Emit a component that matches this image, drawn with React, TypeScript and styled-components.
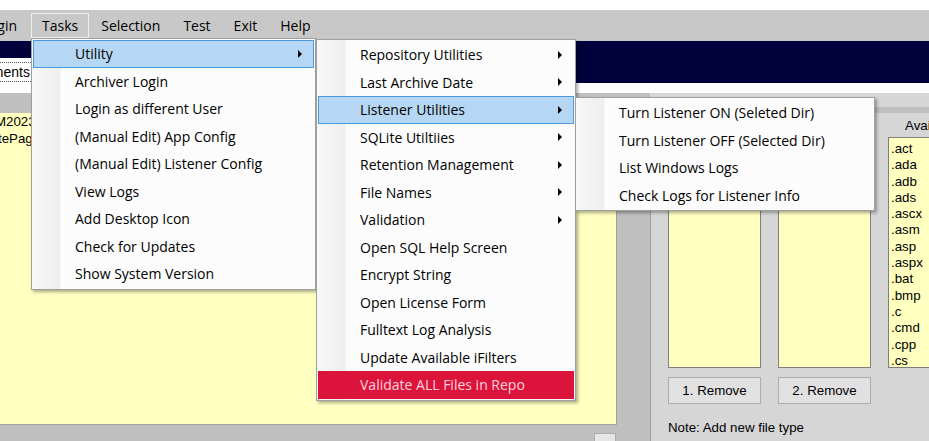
import React from 'react';
import styled, { createGlobalStyle, css } from 'styled-components';

const UI_FONT = `"Open Sans", "Noto Sans", sans-serif`;
const LIST_FONT = `"Liberation Sans", Arial, sans-serif`;

const GlobalStyle = createGlobalStyle`
  html, body { margin: 0; padding: 0; background: #ffffff; overflow: hidden; }
  #root { width: 929px; height: 441px; }
`;

const Window = styled.div`
  position: relative;
  width: 929px;
  height: 441px;
  overflow: hidden;
  display: flex;
  flex-direction: column;
  background: #bfbfbf;
`;

const TopStrip = styled.div`
  flex: none;
  height: 10px;
  background: #ffffff;
`;

const MenuBar = styled.div`
  flex: none;
  height: 31px;
  background: #c8c8c8;
  display: flex;
  align-items: center;
  gap: 1px;
  font-family: ${UI_FONT};
  font-size: 14px;
  color: #000;
`;

const MenuBarItem = styled.div<{ $open?: boolean; $lead?: boolean }>`
  box-sizing: border-box;
  height: 25px;
  display: flex;
  align-items: center;
  justify-content: flex-end;
  padding: 0 10px;
  border: 1px solid ${(p) => (p.$open ? '#efefef' : 'transparent')};
  white-space: nowrap;
  ${(p) =>
    p.$lead &&
    css`
      width: 58px;
      margin-left: -28px;
      flex: none;
      padding-right: 12px;
    `}
`;

const Header = styled.div`
  flex: none;
  height: 52px;
  background: #ffffff;
  display: flex;
  flex-direction: column;
`;

const NavyBand = styled.div`
  height: 42px;
  background: #00003a;
  display: flex;
  align-items: flex-end;
`;

const DocTab = styled.div`
  width: 80px;
  height: 34px;
  margin-left: -49px;
  margin-bottom: -9px;
  background: #ffffff;
  box-sizing: border-box;
  padding-top: 4px;
`;

const FocusRect = styled.div`
  height: 20px;
  box-sizing: border-box;
  border-top: 1px dotted #555;
  border-bottom: 1px dotted #555;
  display: flex;
  align-items: center;
  justify-content: flex-end;
  padding-right: 1px;
  font-family: ${LIST_FONT};
  font-size: 14px;
  color: #000;
`;

const Content = styled.div`
  flex: 1;
  display: grid;
  grid-template-columns: 617px 33px 1fr;
  min-height: 0;
`;

const LeftColumn = styled.div`
  display: flex;
  flex-direction: column;
  padding-top: 20px;
`;

const YellowPanel = styled.div`
  height: 312px;
  box-sizing: border-box;
  background: #ffffc0;
  border-right: 1px solid #a0a0a0;
  border-bottom: 1px solid #a0a0a0;
  padding: 1px 0 0 0;
  font-family: ${LIST_FONT};
  font-size: 13.3px;
  line-height: 16.5px;
  color: #000;
  overflow: hidden;
`;

const PanelLine = styled.div`
  margin-left: -5px;
  white-space: nowrap;
`;

const BottomStrip = styled.div`
  flex: 1;
  display: flex;
  justify-content: flex-end;
  align-items: flex-start;
  padding: 8px 1px 0 0;
`;

const MiniButton = styled.div`
  width: 22px;
  height: 14px;
  box-sizing: border-box;
  background: #e6e6e6;
  border: 1px solid #adadad;
`;

const RightColumn = styled.div`
  grid-column: 3;
  display: flex;
  flex-direction: column;
  min-height: 0;
`;

const RightCap = styled.div`
  flex: none;
  height: 14px;
  background: #d6d6d6;
  margin-bottom: 6px;
`;

const RightPanel = styled.div`
  flex: 1;
  background: #d6d6d6;
  border-left: 1px solid #9c9c9c;
  padding-left: 17px;
  font-family: ${LIST_FONT};
  font-size: 13.3px;
  color: #000;
  overflow: hidden;
`;

const ListGrid = styled.div`
  display: grid;
  grid-template-columns: 93px 93px 93px;
  grid-template-rows: 24px 231px 27px;
  column-gap: 17px;
`;

const ListLabel = styled.div`
  display: flex;
  align-items: center;
  padding-left: 17px;
  white-space: nowrap;
`;

const ListBox = styled.div`
  box-sizing: border-box;
  background: #ffffc0;
  border: 1px solid #7f7f7f;
  padding: 3px 0 0 2px;
  line-height: 16.3px;
  overflow: hidden;
`;

const ListItem = styled.div`
  white-space: nowrap;
`;

const PushButton = styled.div`
  box-sizing: border-box;
  margin-top: 9px;
  height: 27px;
  background: #e1e1e1;
  border: 1px solid #adadad;
  display: flex;
  align-items: center;
  justify-content: center;
`;

const ButtonRow = styled.div`
  display: contents;
`;

const Note = styled.div`
  margin-top: 25px;
  line-height: 15px;
  white-space: nowrap;
`;

const NoteIndent = styled.div`
  margin-top: 5px;
  padding-left: 80px;
  line-height: 15px;
  white-space: nowrap;
`;

/* ----- drop-down menus (overlays) ----- */

const DropMenu = styled.div<{ $left: number; $top: number; $width: number }>`
  position: absolute;
  left: ${(p) => p.$left}px;
  top: ${(p) => p.$top}px;
  width: ${(p) => p.$width}px;
  box-sizing: border-box;
  padding: 1px;
  border: 1px solid #a0a0a0;
  background: linear-gradient(to right, #f8f8f8 0px, #eeeeee 28px, #fcfcfc 29px);
  box-shadow: 2px 2px 3px rgba(0, 0, 0, 0.32);
  font-family: ${UI_FONT};
  font-size: 14px;
  color: #000;
  z-index: 5;
`;

type ItemState = 'normal' | 'hover' | 'danger';

const MenuItem = styled.div<{ $state?: ItemState }>`
  height: 27.5px;
  box-sizing: border-box;
  display: flex;
  align-items: center;
  padding: 0 11px 0 41px;
  border: 1px solid transparent;
  white-space: nowrap;
  ${(p) =>
    p.$state === 'hover' &&
    css`
      background: #b5d7f3;
      border-color: #4c9ae0;
    `}
  ${(p) =>
    p.$state === 'danger' &&
    css`
      background: #dc143c;
      border-color: #dc143c;
      color: #ffd2dc;
    `}
`;

const SubArrow = styled.span`
  margin-left: auto;
  width: 0;
  height: 0;
  border-left: 4px solid #000;
  border-top: 4px solid transparent;
  border-bottom: 4px solid transparent;
`;

type Entry = { label: string; sub?: boolean; state?: ItemState };

const tasks: Entry[] = [
  { label: 'Utility', sub: true, state: 'hover' },
  { label: 'Archiver Login' },
  { label: 'Login as different User' },
  { label: '(Manual Edit) App Config' },
  { label: '(Manual Edit) Listener Config' },
  { label: 'View Logs' },
  { label: 'Add Desktop Icon' },
  { label: 'Check for Updates' },
  { label: 'Show System Version' },
];

const utility: Entry[] = [
  { label: 'Repository Utilities', sub: true },
  { label: 'Last Archive Date', sub: true },
  { label: 'Listener Utilities', sub: true, state: 'hover' },
  { label: 'SQLite Utiltiies', sub: true },
  { label: 'Retention Management', sub: true },
  { label: 'File Names', sub: true },
  { label: 'Validation', sub: true },
  { label: 'Open SQL Help Screen' },
  { label: 'Encrypt String' },
  { label: 'Open License Form' },
  { label: 'Fulltext Log Analysis' },
  { label: 'Update Available iFilters' },
  { label: 'Validate ALL Files in Repo', state: 'danger' },
];

const listener: Entry[] = [
  { label: 'Turn Listener ON (Seleted Dir)' },
  { label: 'Turn Listener OFF (Selected Dir)' },
  { label: 'List Windows Logs' },
  { label: 'Check Logs for Listener Info' },
];

const fileTypes = ['.act', '.ada', '.adb', '.ads', '.ascx', '.asm', '.asp', '.aspx', '.bat', '.bmp', '.c', '.cmd', '.cpp', '.cs'];

const Menu: React.FC<{ left: number; top: number; width: number; items: Entry[] }> = ({ left, top, width, items }) => (
  <DropMenu $left={left} $top={top} $width={width}>
    {items.map((it) => (
      <MenuItem key={it.label} $state={it.state}>
        <span>{it.label}</span>
        {it.sub && <SubArrow />}
      </MenuItem>
    ))}
  </DropMenu>
);

export default function App() {
  return (
    <>
      <GlobalStyle />
      <Window>
        <TopStrip />
        <MenuBar>
          <MenuBarItem $lead>Login</MenuBarItem>
          <MenuBarItem $open>Tasks</MenuBarItem>
          <MenuBarItem>Selection</MenuBarItem>
          <MenuBarItem>Test</MenuBarItem>
          <MenuBarItem>Exit</MenuBarItem>
          <MenuBarItem>Help</MenuBarItem>
        </MenuBar>
        <Header>
          <NavyBand>
            <DocTab>
              <FocusRect>Documents</FocusRect>
            </DocTab>
          </NavyBand>
        </Header>
        <Content>
          <LeftColumn>
            <YellowPanel>
              <PanelLine>M2023 Archive Repository</PanelLine>
              <PanelLine>itePages Library</PanelLine>
            </YellowPanel>
            <BottomStrip>
              <MiniButton />
            </BottomStrip>
          </LeftColumn>
          <RightColumn>
            <RightCap />
            <RightPanel>
              <ListGrid>
                <ListLabel>Selected</ListLabel>
                <ListLabel>Excluded</ListLabel>
                <ListLabel>Available</ListLabel>
                <ListBox />
                <ListBox />
                <ListBox>
                  {fileTypes.map((t) => (
                    <ListItem key={t}>{t}</ListItem>
                  ))}
                </ListBox>
                <ButtonRow>
                  <PushButton>1. Remove</PushButton>
                  <PushButton>2. Remove</PushButton>
                </ButtonRow>
              </ListGrid>
              <Note>Note: Add new file type</Note>
              <NoteIndent>1. Remove or 2. Select</NoteIndent>
            </RightPanel>
          </RightColumn>
        </Content>
        <Menu left={31} top={38} width={285} items={tasks} />
        <Menu left={316} top={39} width={260} items={utility} />
        <Menu left={575} top={97} width={300} items={listener} />
      </Window>
    </>
  );
}
